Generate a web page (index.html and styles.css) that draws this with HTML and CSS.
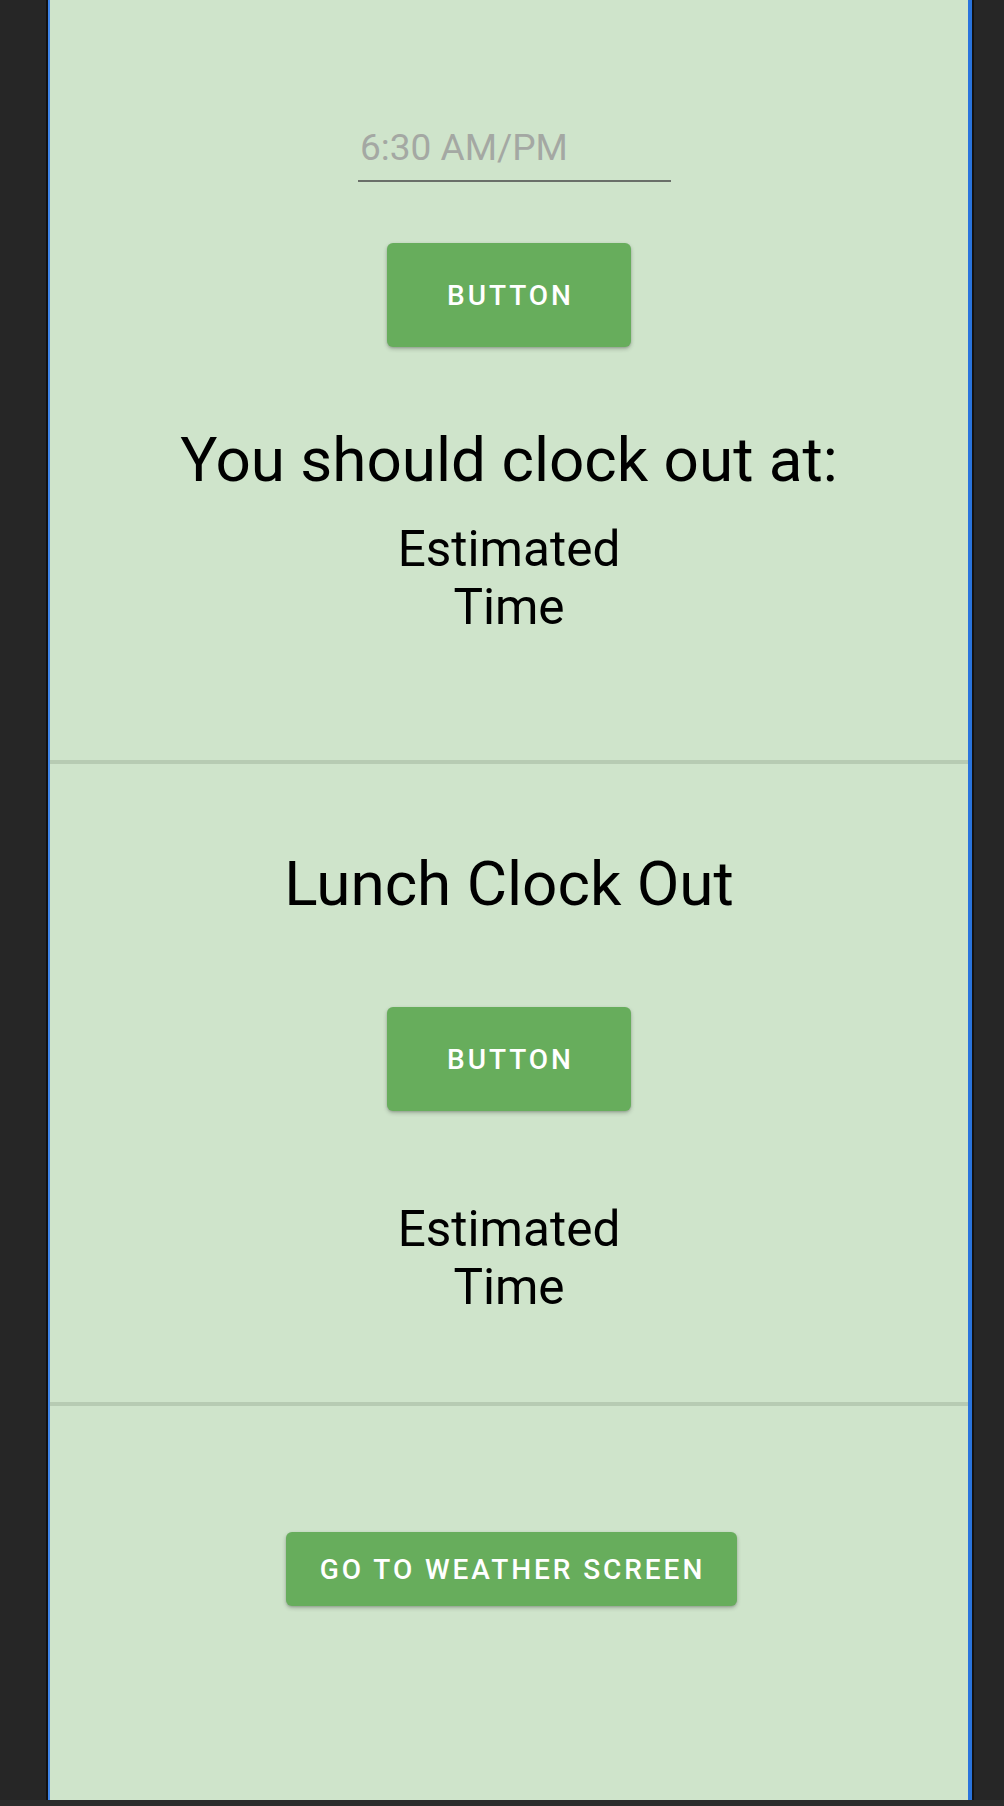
FILE: index.html
```html
<!DOCTYPE html>
<html>
<head>
<meta charset="utf-8">
<link rel="stylesheet" href="styles.css">
</head>
<body>
<div class="frame">
  <div class="screen-edge">
    <main class="screen">
      <section class="section section-top">
        <div class="time-field"><span class="hint">6:30 AM/PM</span></div>
        <div class="btn btn-big btn-first">BUTTON</div>
        <h1 class="title title-first">You should clock out at:</h1>
        <p class="estimate estimate-first">Estimated Time</p>
      </section>
      <div class="divider divider-first"></div>
      <section class="section">
        <h2 class="title title-lunch">Lunch Clock Out</h2>
        <div class="btn btn-big btn-second">BUTTON</div>
        <p class="estimate estimate-second">Estimated Time</p>
      </section>
      <div class="divider divider-second"></div>
      <section class="section">
        <div class="btn btn-weather">GO TO WEATHER SCREEN</div>
      </section>
    </main>
  </div>
</div>
<div class="bottom-bar"></div>
</body>
</html>
```
FILE: styles.css
```css
html, body {
  margin: 0;
  padding: 0;
  background: #262626;
}

body {
  width: 1004px;
  height: 1806px;
  overflow: hidden;
  font-family: Roboto, "Liberation Sans", sans-serif;
}

.frame {
  margin-left: 46px;
  width: 928px;
  height: 1800px;
  padding: 0 2px;
  box-sizing: border-box;
  background: #121212;
}

.screen-edge {
  height: 100%;
  border-left: 2px solid #3f86ec;
  border-right: 4px solid #2a74dc;
}

.screen {
  width: 918px;
  height: 100%;
  background: #cfe4cb;
  display: flex;
  flex-direction: column;
  align-items: center;
}

.section {
  width: 100%;
  display: flex;
  flex-direction: column;
  align-items: center;
}

.time-field {
  margin-top: 126px;
  margin-left: 11px;
  width: 313px;
  padding: 0 0 10px 2px;
  box-sizing: border-box;
  border-bottom: 2px solid #6a6f69;
}

.hint {
  display: block;
  font-size: 37px;
  line-height: 44px;
  color: #a4a8a3;
}

.btn {
  display: flex;
  align-items: center;
  justify-content: center;
  background: #67ad5c;
  color: #ffffff;
  font-weight: 500;
  font-size: 28px;
  letter-spacing: 0.105em;
  border-radius: 6px;
  box-shadow: 0 2px 4px rgba(0, 0, 0, 0.22), 0 1px 2px rgba(0, 0, 0, 0.12);
  box-sizing: border-box;
}

.btn-big {
  width: 244px;
  height: 104px;
  padding-left: 3px;
}

.btn-first {
  margin-top: 61px;
}

.btn-second {
  margin-top: 87px;
}

.btn-weather {
  margin-top: 126px;
  margin-left: 4px;
  width: 451px;
  height: 74px;
  padding-left: 3px;
}

.title {
  margin: 0;
  font-weight: 400;
  font-size: 62px;
  line-height: 72px;
  color: #000000;
  text-align: center;
}

.title-first {
  margin-top: 77px;
}

.title-lunch {
  margin-top: 84px;
}

.estimate {
  margin: 0;
  width: 270px;
  font-size: 49.5px;
  line-height: 58px;
  color: #000000;
  text-align: center;
}

.estimate-first {
  margin-top: 24px;
}

.estimate-second {
  margin-top: 89px;
}

.divider {
  width: 100%;
  height: 4px;
  background: #b7cbb3;
}

.divider-first {
  margin-top: 124px;
}

.divider-second {
  margin-top: 86px;
}

.bottom-bar {
  height: 6px;
  background: #2b2b2b;
}
```
